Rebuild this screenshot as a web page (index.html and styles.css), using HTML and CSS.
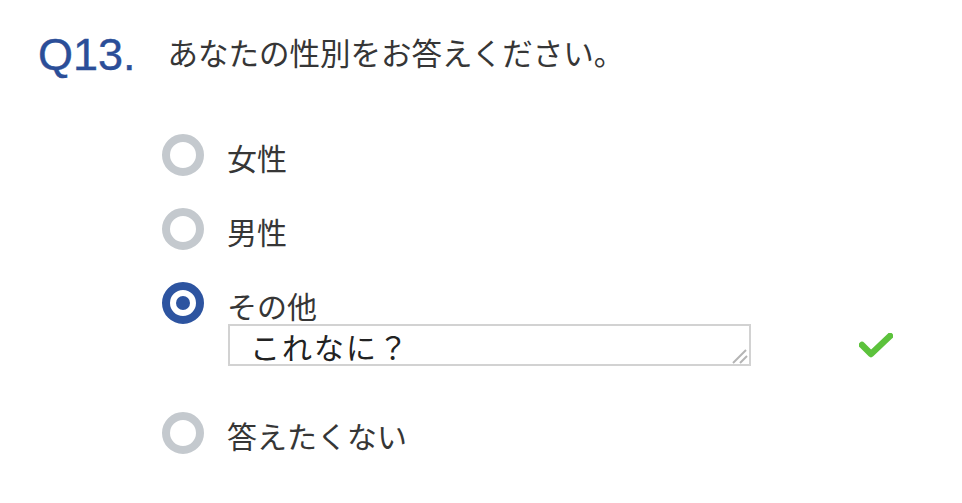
FILE: index.html
```html
<!DOCTYPE html>
<html lang="ja">
<head>
<meta charset="utf-8">
<title>Q13</title>
<link rel="stylesheet" href="styles.css">
</head>
<body>
<div class="question">
  <span class="qnum">Q13.</span>
  <span class="qtext">あなたの性別をお答えください。</span>
</div>
<div class="options">
  <label class="option">
    <input type="radio" class="radio" name="sex">
    <span class="label">女性</span>
  </label>
  <label class="option">
    <input type="radio" class="radio" name="sex">
    <span class="label">男性</span>
  </label>
  <div class="option other">
    <input type="radio" class="radio" name="sex" checked>
    <div class="other-body">
      <span class="label">その他</span>
      <div class="other-row">
        <div class="input-wrap">
          <textarea class="other-input">これなに？</textarea>
          <svg class="grip" width="18" height="16" viewBox="0 0 18 16">
            <line x1="3" y1="15" x2="16" y2="2" stroke="#b4b4b4" stroke-width="2"/>
            <line x1="10" y1="15" x2="17" y2="8" stroke="#b4b4b4" stroke-width="2"/>
          </svg>
        </div>
        <svg class="check" width="34" height="26" viewBox="0 0 34 26">
          <polyline points="3,12 12,21 31,3" fill="none" stroke="#5cc23c" stroke-width="6.5" stroke-linecap="round" stroke-linejoin="round"/>
        </svg>
      </div>
    </div>
  </div>
  <label class="option">
    <input type="radio" class="radio" name="sex">
    <span class="label">答えたくない</span>
  </label>
</div>
</body>
</html>
```

FILE: styles.css
```css
html, body {
  margin: 0;
  padding: 0;
  background: #ffffff;
}

body {
  font-family: "Noto Sans CJK JP", "Noto Sans", sans-serif;
  color: #363636;
}

.question {
  display: flex;
  align-items: center;
  padding: 25px 0 0 38px;
  height: 60px;
}

.qnum {
  font-family: "Liberation Sans", Arial, sans-serif;
  font-size: 45px;
  line-height: 56px;
  color: #2b4e98;
  -webkit-text-stroke: 0.4px #2b4e98;
}

.qtext {
  font-size: 30.5px;
  line-height: 56px;
  margin-left: 32px;
  margin-bottom: 6px;
  color: #363636;
}

.options {
  display: flex;
  flex-direction: column;
  gap: 32px;
  padding: 49px 0 0 162px;
}

.option {
  display: flex;
  align-items: flex-start;
  gap: 23px;
}

.radio {
  appearance: none;
  -webkit-appearance: none;
  margin: 0;
  width: 42px;
  height: 42px;
  border: 8px solid #c4c9ce;
  border-radius: 50%;
  box-sizing: border-box;
  background: #ffffff;
  flex: none;
  position: relative;
}

.radio:checked {
  border-color: #2d54a0;
}

.radio:checked::after {
  content: "";
  position: absolute;
  left: 6px;
  top: 6px;
  width: 14px;
  height: 14px;
  border-radius: 50%;
  background: #2d54a0;
}

.label {
  display: block;
  font-size: 30px;
  line-height: 42px;
  padding-top: 2px;
  height: 40px;
}

.other-body {
  display: flex;
  flex-direction: column;
}

.other-row {
  display: flex;
  align-items: center;
  gap: 108px;
  margin-left: 1px;
}

.input-wrap {
  position: relative;
  display: flex;
}

.other-input {
  width: 523px;
  height: 42px;
  box-sizing: border-box;
  border: 2px solid #d2d2d2;
  border-radius: 0;
  padding: 2px 0 0 20px;
  margin: 0;
  font-family: "Noto Sans CJK JP", sans-serif;
  font-size: 30px;
  letter-spacing: 2px;
  line-height: 36px;
  color: #222222;
  overflow: hidden;
  outline: none;
  resize: none;
}

.grip {
  position: absolute;
  right: 3px;
  bottom: 2px;
}

.check {
  display: block;
  margin-top: 2px;
}

.other + .option {
  margin-top: 14px;
}
```
